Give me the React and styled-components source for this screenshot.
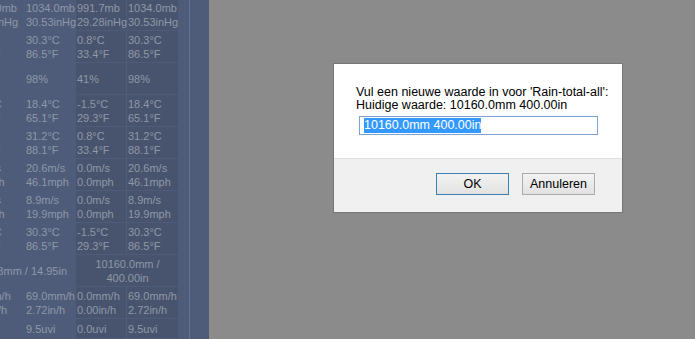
import styled, { createGlobalStyle } from 'styled-components';

const GlobalStyle = createGlobalStyle`
  html, body {
    margin: 0;
    padding: 0;
    background: #8b8b8b;
    overflow: hidden;
  }
`;

const Screen = styled.div`
  display: flex;
  height: 339px;
  width: 695px;
  overflow: hidden;
`;

const DataPane = styled.div`
  background: #4e5c79;
  display: flex;
  flex: 0 0 209px;
  overflow: hidden;
`;

const TableClip = styled.div`
  border-right: 1px solid #66728c;
  flex: 0 0 189px;
  overflow: hidden;
`;

const Table = styled.table`
  border-collapse: separate;
  border-spacing: 1px;
  color: #8e98a8;
  font-family: 'Liberation Sans', Arial, sans-serif;
  font-size: 11px;
  line-height: 14px;
  margin: -2px 0 0 -34px;
  table-layout: fixed;
  width: 213px;
`;

const Cell = styled.td`
  background: ${({ $dark }) => ($dark ? '#48546d' : 'transparent')};
  height: ${({ $compact }) => ($compact ? '19px' : '31px')};
  overflow: visible;
  padding: 0 0 0 1px;
  text-align: ${({ $center }) => ($center ? 'center' : 'left')};
  vertical-align: middle;
  white-space: nowrap;
`;

const WrapCell = styled(Cell)`
  white-space: normal;
`;

const Overlay = styled.div`
  background: #8b8b8b;
  flex: 1;
  padding: 64px 0 0 125px;
`;

const Dialog = styled.div`
  background: #fff;
  box-shadow: 0 0 0 1px #767676;
  font-family: 'Liberation Sans', Arial, sans-serif;
  font-size: 12.5px;
  color: #000;
  width: 288px;
`;

const Body = styled.div`
  height: 72px;
  padding: 22px 0 0 22px;
`;

const Prompt = styled.p`
  line-height: 13px;
  margin: 0;
`;

const Input = styled.div`
  border: 1px solid #7da2ce;
  box-sizing: border-box;
  height: 19px;
  margin: 4px 0 0 3px;
  padding: 1px 0 0 4px;
  width: 239px;

  span {
    background: #3399ff;
    color: #fff;
    display: inline-block;
    line-height: 15px;
  }
`;

const Footer = styled.div`
  background: #f0f0f0;
  border-top: 1px solid #dfdfdf;
  display: flex;
  gap: 13px;
  height: 54px;
  justify-content: flex-end;
  padding: 14px 27px 0 0;
  box-sizing: border-box;
`;

const Button = styled.button`
  background: linear-gradient(#f2f2f2, #e2e2e2);
  border: 1px solid ${({ $focused }) => ($focused ? '#3c7fb1' : '#acacac')};
  border-radius: 0;
  color: #000;
  font-family: 'Liberation Sans', Arial, sans-serif;
  font-size: 12.5px;
  height: 22px;
  padding: 0;
  width: 73px;
`;

const rows = [
  [['1034.0mb', '30.53inHg'], ['1034.0mb', '30.53inHg'], ['991.7mb', '29.28inHg'], ['1034.0mb', '30.53inHg']],
  [['5.2°C', '41.4°F'], ['30.3°C', '86.5°F'], ['0.8°C', '33.4°F'], ['30.3°C', '86.5°F']],
  [['38%'], ['98%'], ['41%'], ['98%']],
  [['12.1°C', '53.8°F'], ['18.4°C', '65.1°F'], ['-1.5°C', '29.3°F'], ['18.4°C', '65.1°F']],
  [['6.1°C', '43.0°F'], ['31.2°C', '88.1°F'], ['0.8°C', '33.4°F'], ['31.2°C', '88.1°F']],
  [['4.3m/s', '9.6mph'], ['20.6m/s', '46.1mph'], ['0.0m/s', '0.0mph'], ['20.6m/s', '46.1mph']],
  [['2.2m/s', '4.9mph'], ['8.9m/s', '19.9mph'], ['0.0m/s', '0.0mph'], ['8.9m/s', '19.9mph']],
  [['12.1°C', '53.8°F'], ['30.3°C', '86.5°F'], ['-1.5°C', '29.3°F'], ['30.3°C', '86.5°F']],
  'rain',
  [['0.0mm/h', '0.00in/h'], ['69.0mm/h', '2.72in/h'], ['0.0mm/h', '0.00in/h'], ['69.0mm/h', '2.72in/h']],
  [['0.0uvi'], ['9.5uvi'], ['0.0uvi'], ['9.5uvi']],
];

function Lines({ lines }) {
  return lines.map((line, i) => (
    <span key={i}>
      {i > 0 && <br />}
      {line}
    </span>
  ));
}

export default function App() {
  return (
    <>
      <GlobalStyle />
      <Screen>
        <DataPane>
          <TableClip>
            <Table>
              <colgroup>
                <col style={{ width: 57 }} />
                <col style={{ width: 50 }} />
                <col style={{ width: 50 }} />
                <col style={{ width: 51 }} />
              </colgroup>
              <tbody>
                {rows.map((row, r) =>
                  row === 'rain' ? (
                    <tr key={r}>
                      <Cell colSpan={2} $center>379.8mm / 14.95in</Cell>
                      <WrapCell colSpan={2} $center $dark>10160.0mm / 400.00in</WrapCell>
                    </tr>
                  ) : (
                    <tr key={r}>
                      {row.map((lines, c) => (
                        <Cell key={c} $dark={c > 1} $compact={r === rows.length - 1}>
                          <Lines lines={lines} />
                        </Cell>
                      ))}
                    </tr>
                  )
                )}
              </tbody>
            </Table>
          </TableClip>
        </DataPane>
        <Overlay>
          <Dialog>
            <Body>
              <Prompt>
                Vul een nieuwe waarde in voor 'Rain-total-all':
                <br />
                Huidige waarde: 10160.0mm 400.00in
              </Prompt>
              <Input>
                <span>10160.0mm 400.00in</span>
              </Input>
            </Body>
            <Footer>
              <Button $focused>OK</Button>
              <Button>Annuleren</Button>
            </Footer>
          </Dialog>
        </Overlay>
      </Screen>
    </>
  );
}
